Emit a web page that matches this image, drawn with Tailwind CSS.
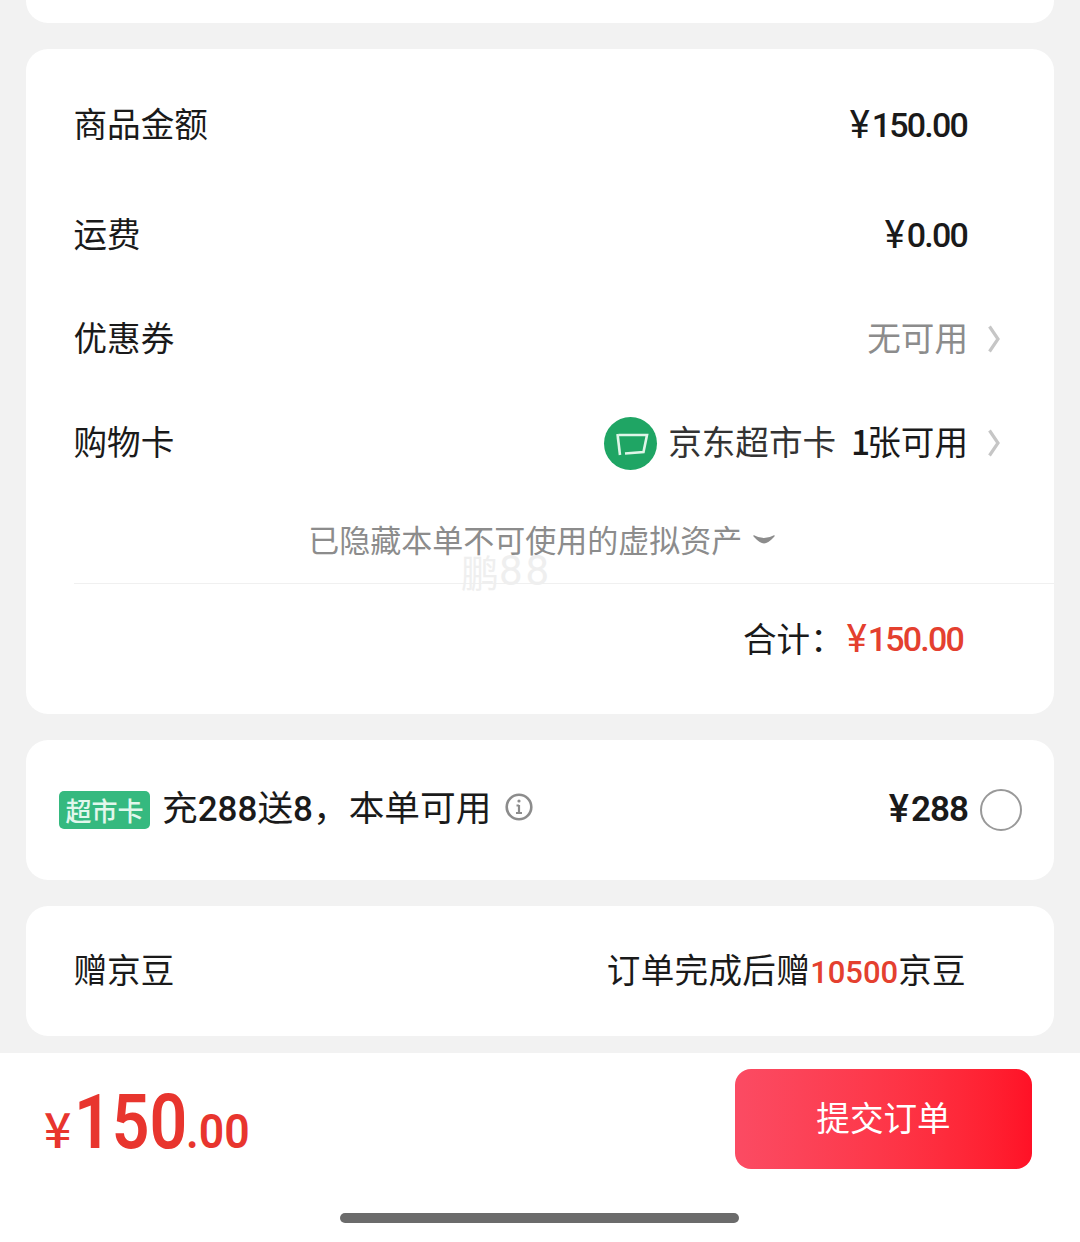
<!DOCTYPE html>
<html lang="zh">
<head>
    <meta charset="UTF-8">
    <title>提交订单</title>
    <script src="https://cdn.jsdelivr.net/npm/@tailwindcss/browser@4"></script>
</head>
<body class="bg-[#f2f2f2] font-['Noto_Sans_CJK_SC','Noto_Sans',sans-serif] text-[#1a1a1a]">
<div class="relative w-[1080px] h-[1242px] overflow-hidden flex flex-col">

    <div class="px-[26px] flex flex-col gap-[26px] flex-1">
        <!-- previous card, cut off -->
        <div class="h-[23px] bg-white rounded-b-[22px]"></div>

        <!-- amounts -->
        <div class="relative h-[665px] bg-white rounded-[22px] pt-[21px] pl-[47.5px] text-[33.6px] leading-none">
            <div class="flex items-center justify-between h-[110px] pr-[87px]">
                <span class="-translate-y-[2px]">商品金额</span>
                <span class="flex items-center font-['Roboto',sans-serif] font-medium text-[34px] tracking-[-1.8px]"><span class="font-normal text-[38px] tracking-normal mr-[2px]">¥</span>150.00</span>
            </div>
            <div class="flex items-center justify-between h-[110px] pr-[87px]">
                <span class="-translate-y-[2px]">运费</span>
                <span class="flex items-center font-['Roboto',sans-serif] font-medium text-[34px] tracking-[-1.8px]"><span class="font-normal text-[38px] tracking-normal mr-[2px]">¥</span>0.00</span>
            </div>
            <div class="flex items-center justify-between h-[98px] pr-[54px]">
                <span class="-translate-y-[2px]">优惠券</span>
                <span class="flex items-center gap-[20px] text-[#8c8c8c]">
                    <span class="-translate-y-[2px]">无可用</span>
                    <svg width="12" height="28" viewBox="0 0 12 28" fill="none" stroke="#c6c6c6" stroke-width="3.2"><path d="M1.5 1.5 L10 14 L1.5 26.5"/></svg>
                </span>
            </div>
            <div class="flex items-center justify-between h-[110px] pr-[54px]">
                <span class="-translate-y-[2px]">购物卡</span>
                <span class="flex items-center">
                    <span class="w-[53px] h-[53px] rounded-full bg-[#1fa564] mr-[11px]">
                        <svg width="53" height="53" viewBox="0 0 53 53" fill="none" stroke="#dff5e8" stroke-width="2.6"><path d="M15 18 L43 18 L39.5 35 L21 36.5"/><path d="M13.5 17 L16 38"/></svg>
                    </span>
                    <span class="text-[#333] -translate-y-[2px]">京东超市卡</span>
                    <span class="ml-[15px] -translate-y-[2px]"><span class="font-medium tracking-[-4px] mr-[1px]">1</span>张可用</span>
                    <svg class="ml-[20px]" width="12" height="28" viewBox="0 0 12 28" fill="none" stroke="#c6c6c6" stroke-width="3.2"><path d="M1.5 1.5 L10 14 L1.5 26.5"/></svg>
                </span>
            </div>
            <div class="flex items-center justify-center h-[86px] border-b border-[#f0f0f0] pr-[44px] text-[#8c8c8c] text-[31px]">
                <span class="flex items-center gap-[11px] -translate-y-[2px]">
                    已隐藏本单不可使用的虚拟资产
                    <svg width="22" height="10" viewBox="0 0 22 10" fill="#8c8c8c"><path d="M0.5 1 Q11 7 21.5 1 L21.5 2.5 Q15 9.5 11 9.5 Q7 9.5 0.5 2.5 Z"/></svg>
                </span>
            </div>
            <div class="flex items-center justify-end h-[109px] pr-[91px]">
                <span class="-translate-y-[1px] mr-[3px]">合计：</span>
                <span class="flex items-center font-['Roboto',sans-serif] font-medium text-[34px] tracking-[-1.8px] text-[#e4402f]"><span class="font-normal text-[38px] tracking-normal mr-[1px]">¥</span>150.00</span>
            </div>
            <!-- watermark -->
            <div class="absolute left-[435px] top-[502px] flex items-center h-[40px] text-[38px] leading-none text-[#efefef] whitespace-nowrap">鹏<span class="text-[42px] tracking-[3px] font-['Roboto',sans-serif]">88</span></div>
        </div>

        <!-- supermarket card offer -->
        <div class="h-[140px] bg-white rounded-[22px] pl-[33px] pr-[32px] flex items-center justify-between">
            <div class="flex items-center">
                <span class="w-[91px] h-[38px] rounded-[5px] bg-[#35b97f] text-[#e2f7ec] text-[26px] font-medium leading-none flex items-center justify-center mr-[12px]">超市卡</span>
                <span class="text-[35.7px] leading-none -translate-y-[3px]">充<span class="font-['Roboto',sans-serif] font-medium text-[35px]">288</span>送<span class="font-['Roboto',sans-serif] font-medium text-[35px]">8</span>，本单可用</span>
                <svg class="ml-[14px] -translate-y-[3px]" width="28" height="28" viewBox="0 0 28 28" fill="none" stroke="#8c8c8c"><circle cx="14" cy="14" r="12.3" stroke-width="2.6"/><path d="M14 12 V20 M11.5 12.5 H14 M11 20 H17" stroke-width="2.2"/><circle cx="14" cy="8" r="1.6" fill="#8c8c8c" stroke="none"/></svg>
            </div>
            <div class="flex items-center gap-[12px]">
                <span class="flex items-center font-['Roboto',sans-serif] font-semibold text-[35px] tracking-[-1px] leading-none -translate-y-[1px]"><span class="font-medium text-[38px] tracking-normal mr-[2px]">¥</span>288</span>
                <span class="w-[42px] h-[42px] rounded-full border-2 border-[#999]"></span>
            </div>
        </div>

        <!-- beans -->
        <div class="h-[130px] bg-white rounded-[22px] pl-[47.5px] pr-[88px] flex items-center justify-between text-[33.6px] leading-none">
            <span class="-translate-y-[2px]">赠京豆</span>
            <span class="-translate-y-[1px] tracking-[.3px]">订单完成后赠<span class="font-['Roboto',sans-serif] font-medium text-[31px] tracking-normal text-[#e4402f]">10500</span>京豆</span>
        </div>
    </div>

    <!-- bottom bar -->
    <div class="h-[189px] bg-white pt-[16px] pl-[44px] pr-[48px] relative">
        <div class="flex items-center justify-between">
            <div class="flex items-baseline text-[#e8352e] font-['Roboto',sans-serif] font-semibold leading-none translate-y-[3px]">
                <span class="font-['Noto_Sans_CJK_SC',sans-serif] font-medium text-[48px] mr-[3px]">¥</span>
                <span class="inline-block w-[112px] origin-left scale-x-[.87] text-[76px]">150</span>
                <span class="inline-block w-[60px] origin-left scale-x-[.91] text-[49px]">.00</span>
            </div>
            <button class="w-[297px] h-[100px] pb-[4px] rounded-[16px] bg-gradient-to-r from-[#fb4b63] to-[#ff1126] text-white text-[33.6px] leading-none">提交订单</button>
        </div>
        <div class="absolute left-[340px] bottom-[19px] w-[399px] h-[10px] rounded-full bg-[#6b6b6b]"></div>
    </div>
</div>
</body>
</html>
